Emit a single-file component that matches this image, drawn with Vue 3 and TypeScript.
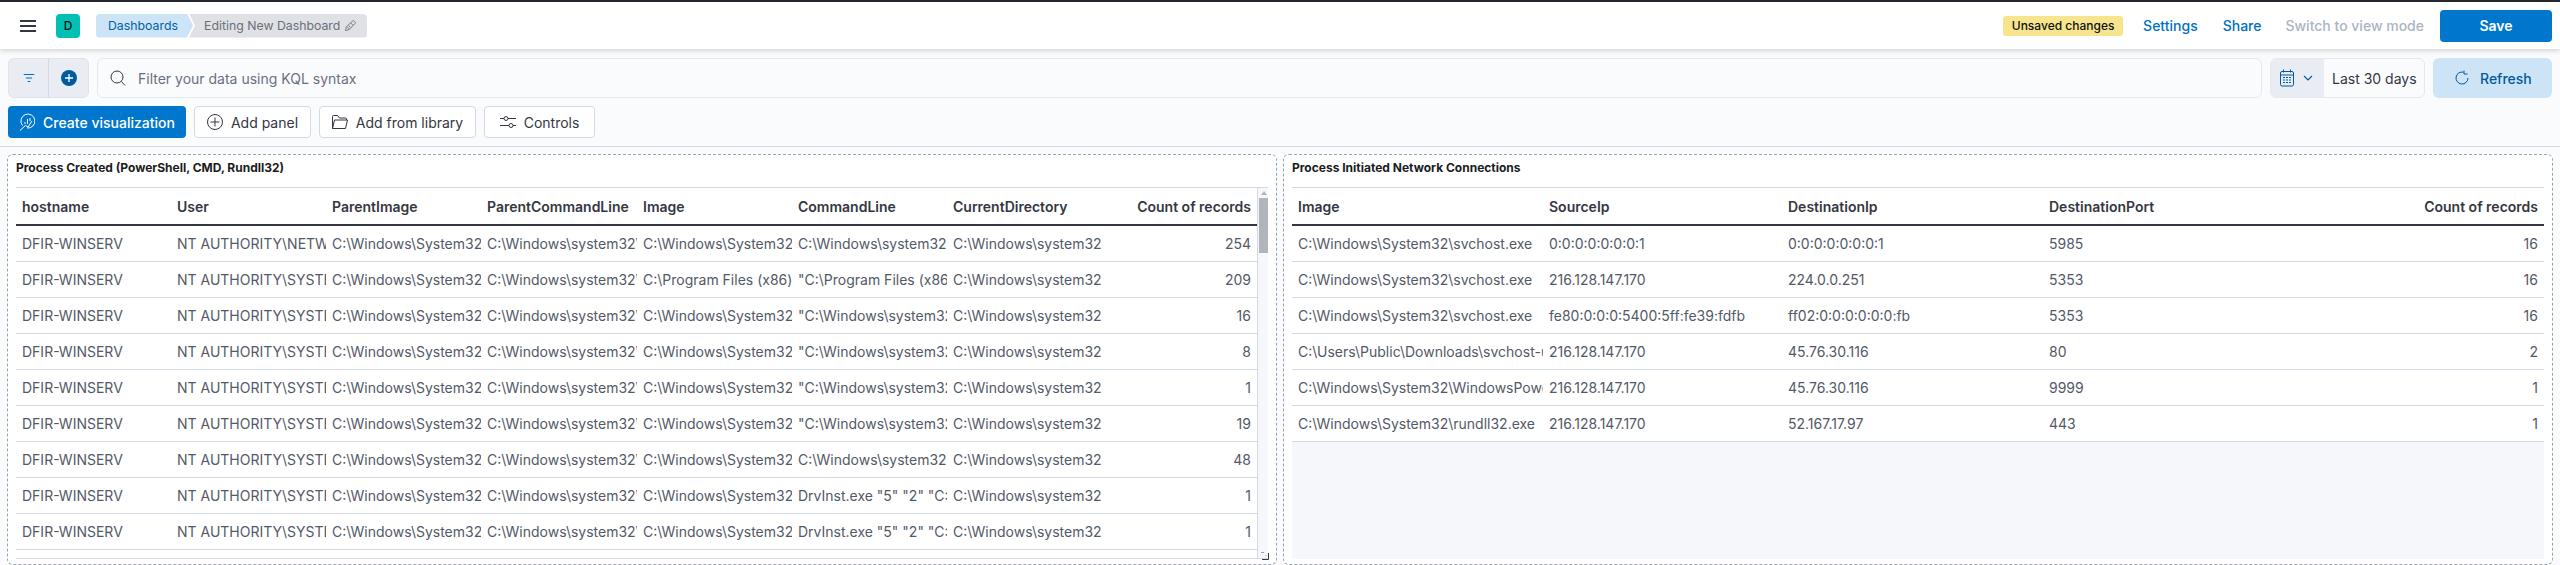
<script setup lang="ts">
interface Column { name: string; width: number; right?: boolean }
interface Panel {
  title: string
  columns: Column[]
  rows: string[][]
  scroll: boolean
}

const sys32 = 'C:\\Windows\\System32\\svchost.exe -k'
const cmd = 'C:\\Windows\\system32\\svchost.exe -k netsvcs'
const dir = 'C:\\Windows\\system32'
const host = 'DFIR-WINSERV'
const sysUser = 'NT AUTHORITY\\SYSTEM'
const quoted = '"C:\\Windows\\system32\\cmd.exe" /c start'
const drv = 'DrvInst.exe "5" "2" "C:\\Windows\\INF"'
const svc = 'C:\\Windows\\System32\\svchost.exe'

const panels: Panel[] = [
  {
    title: 'Process Created (PowerShell, CMD, Rundll32)',
    scroll: true,
    columns: [
      { name: 'hostname', width: 155 },
      { name: 'User', width: 155 },
      { name: 'ParentImage', width: 155 },
      { name: 'ParentCommandLine', width: 156 },
      { name: 'Image', width: 155 },
      { name: 'CommandLine', width: 155 },
      { name: 'CurrentDirectory', width: 155 },
      { name: 'Count of records', width: 155, right: true },
    ],
    rows: [
      [host, 'NT AUTHORITY\\NETWORK SERVICE', sys32, cmd, sys32, cmd, dir, '254'],
      [host, sysUser, sys32, cmd, 'C:\\Program Files (x86)\\Agent\\agent.exe', '"C:\\Program Files (x86)\\Agent\\agent.exe"', dir, '209'],
      [host, sysUser, sys32, cmd, sys32, quoted, dir, '16'],
      [host, sysUser, sys32, cmd, sys32, quoted, dir, '8'],
      [host, sysUser, sys32, cmd, sys32, quoted, dir, '1'],
      [host, sysUser, sys32, cmd, sys32, quoted, dir, '19'],
      [host, sysUser, sys32, cmd, sys32, cmd, dir, '48'],
      [host, sysUser, sys32, cmd, sys32, drv, dir, '1'],
      [host, sysUser, sys32, cmd, sys32, drv, dir, '1'],
    ],
  },
  {
    title: 'Process Initiated Network Connections',
    scroll: false,
    columns: [
      { name: 'Image', width: 251 },
      { name: 'SourceIp', width: 239 },
      { name: 'DestinationIp', width: 261 },
      { name: 'DestinationPort', width: 261 },
      { name: 'Count of records', width: 240, right: true },
    ],
    rows: [
      [svc, '0:0:0:0:0:0:0:1', '0:0:0:0:0:0:0:1', '5985', '16'],
      [svc, '216.128.147.170', '224.0.0.251', '5353', '16'],
      [svc, 'fe80:0:0:0:5400:5ff:fe39:fdfb', 'ff02:0:0:0:0:0:0:fb', '5353', '16'],
      ['C:\\Users\\Public\\Downloads\\svchost-update.exe', '216.128.147.170', '45.76.30.116', '80', '2'],
      ['C:\\Windows\\System32\\WindowsPowerShell\\v1.0\\powershell.exe', '216.128.147.170', '45.76.30.116', '9999', '1'],
      ['C:\\Windows\\System32\\rundll32.exe', '216.128.147.170', '52.167.17.97', '443', '1'],
    ],
  },
]
</script>

<template>
  <div class="app">
    <header class="topbar">
      <button class="burger" aria-label="menu"><span></span><span></span><span></span></button>
      <div class="logo">D</div>
      <nav class="crumbs">
        <span class="crumb first">Dashboards</span>
        <span class="crumb second">
          Editing New Dashboard
          <svg width="12" height="12" viewBox="0 0 16 16" fill="none" stroke="#69707d" stroke-width="1.2">
            <path d="M2 14l1-4.500L11 1.500a1.800 1.800 0 0 1 2.600 0l.9.9a1.800 1.800 0 0 1 0 2.600L6.500 13z" />
            <path d="M4 9l3.500 3.500M6 7l3 3M9 4l3 3" />
          </svg>
        </span>
      </nav>
      <div class="actions">
        <span class="badge">Unsaved changes</span>
        <a class="link settings">Settings</a>
        <a class="link share">Share</a>
        <a class="link muted">Switch to view mode</a>
        <button class="save">Save</button>
      </div>
    </header>

    <section class="filters">
      <div class="filter-group">
        <span class="filter-btn">
          <svg width="14" height="14" viewBox="0 0 16 16" stroke="#0071c2" stroke-width="1.300" fill="none">
            <path d="M2 4h12M4.500 8h7M6.500 12h3" />
          </svg>
        </span>
        <span class="filter-btn">
          <svg width="16" height="16" viewBox="0 0 16 16">
            <circle cx="8" cy="8" r="8" fill="#005a9e" />
            <path d="M8 4v8M4 8h8" stroke="#fff" stroke-width="1.300" />
          </svg>
        </span>
      </div>
      <div class="query">
        <svg width="16" height="16" viewBox="0 0 16 16" fill="none" stroke="#343741" stroke-width="1">
          <circle cx="7" cy="7" r="6" />
          <path d="M11.500 11.500l3.500 4" />
        </svg>
        <span>Filter your data using KQL syntax</span>
      </div>
      <div class="date">
        <span class="date-icon">
          <svg width="14" height="18" viewBox="0 0 14 18" fill="none" stroke="#005a9e" stroke-width="1">
            <rect x="0.500" y="2.500" width="13" height="14.500" rx="1.500" />
            <path d="M0.500 6h13M3.500 0.500v3M10.500 0.500v3" />
            <path d="M3 8.500h2M6 8.500h2M9 8.500h2M3 11h2M6 11h2M9 11h2M3 13.500h2M6 13.500h2M9 13.500h2" stroke-width="1.200" />
          </svg>
          <svg width="10" height="6" viewBox="0 0 10 6" fill="none" stroke="#005a9e" stroke-width="1.100">
            <path d="M1 1l4 4 4-4" />
          </svg>
        </span>
        <span class="date-text">Last 30 days</span>
      </div>
      <button class="refresh">
        <svg width="14" height="16" viewBox="0 0 14 16" fill="none" stroke="#005a9e" stroke-width="1">
          <path d="M8.500 2.200A6 6 0 1 0 13 8" />
          <path d="M9 0.500v3.500h3.500" />
        </svg>
        Refresh
      </button>
    </section>

    <section class="toolbar">
      <button class="tool primary">
        <svg width="16" height="18" viewBox="0 0 16 18" fill="none" stroke="#fff" stroke-width="1">
          <path d="M3.500 12.500A7 7 0 1 1 8 15" />
          <path d="M1 17.500l5.500-5 2.500 1.500 4-6" />
          <path d="M6 9v2M8.500 6v5M11 5v3" />
        </svg>
        Create visualization
      </button>
      <button class="tool add">
        <svg width="16" height="16" viewBox="0 0 16 16" fill="none" stroke="#343741" stroke-width="1">
          <circle cx="8" cy="8" r="7.500" />
          <path d="M8 3.500v9M3.500 8h9" />
        </svg>
        Add panel
      </button>
      <button class="tool library">
        <svg width="16" height="14" viewBox="0 0 16 14" fill="none" stroke="#343741" stroke-width="1">
          <path d="M0.500 13.500V1.500a1 1 0 0 1 1-1h4l2 2.500h6a1 1 0 0 1 1 1V5" />
          <path d="M0.500 13.500l2-8.500h13l-2 8.500z" />
        </svg>
        Add from library
      </button>
      <button class="tool controls">
        <svg width="16" height="12" viewBox="0 0 16 12" fill="none" stroke="#343741" stroke-width="1">
          <path d="M0 2.500h4M8 2.500h8M0 9.500h9M13 9.500h3" />
          <circle cx="6" cy="2.500" r="2" />
          <circle cx="11" cy="9.500" r="2" />
        </svg>
        Controls
      </button>
    </section>

    <main class="panels">
      <article v-for="panel in panels" :key="panel.title" class="panel">
        <h2 class="panel-title">{{ panel.title }}</h2>
        <div class="table-wrap" :class="{ empty: !panel.scroll }">
          <table class="grid" :style="{ width: panel.columns.reduce((a, c) => a + c.width, 0) + 'px' }">
            <colgroup>
              <col v-for="col in panel.columns" :key="col.name" :style="{ width: col.width + 'px' }" />
            </colgroup>
            <thead>
              <tr>
                <th v-for="col in panel.columns" :key="col.name" :class="{ right: col.right }">
                  <div class="cell">{{ col.name }}</div>
                </th>
              </tr>
            </thead>
            <tbody>
              <tr v-for="(row, i) in panel.rows" :key="i">
                <td v-for="(val, j) in row" :key="j" :class="{ right: panel.columns[j].right }">
                  <div class="cell">{{ val }}</div>
                </td>
              </tr>
            </tbody>
          </table>
          <div v-if="panel.scroll" class="scrollbar">
            <span class="arrow"></span>
            <span class="thumb"></span>
          </div>
        </div>
        <svg v-if="panel.scroll" class="resize" width="8" height="8" viewBox="0 0 8 8" fill="none" stroke="#343741" stroke-width="1">
          <path d="M7.500 1v6.500H1" />
          <path d="M0 0.500h3M5 4v-1" stroke="#98a2b3" />
        </svg>
      </article>
    </main>
  </div>
</template>

<style>
html, body {
  margin: 0;
  height: 565px;
  overflow: hidden;
  background: #fafbfd;
}
</style>

<style scoped>
.app {
  width: 2560px;
  height: 565px;
  overflow: hidden;
  background: #fafbfd;
  font-family: Inter, "Noto Sans", sans-serif;
  font-size: 14px;
  color: #343741;
}
button { font: inherit; border: 0; padding: 0; background: none; }

.topbar {
  position: relative;
  z-index: 2;
  box-sizing: border-box;
  height: 49px;
  display: flex;
  align-items: center;
  padding: 0 8px 0 20px;
  background: #fff;
  border-top: 2px solid #25282f;
  box-shadow: 0 1px 5px rgba(0, 0, 0, 0.12), 0 3px 6px rgba(0, 0, 0, 0.06);
}
.burger { width: 16px; display: flex; flex-direction: column; gap: 3px; margin-right: 20px; }
.burger span { height: 2px; background: #343741; }
.logo {
  width: 24px;
  height: 24px;
  margin-right: 16px;
  border-radius: 4px;
  background: #00bfb3;
  color: #111;
  font-size: 12px;
  font-weight: 500;
  line-height: 24px;
  text-align: center;
}
.crumbs { display: flex; height: 24px; font-size: 12.300px; line-height: 23px; }
.crumb { display: flex; align-items: center; box-sizing: border-box; }
.first {
  width: 97px;
  padding-left: 12px;
  background: #cce4f5;
  color: #0061a6;
  border-radius: 4px 0 0 4px;
  clip-path: polygon(0 0, 91px 0, 100% 50%, 91px 100%, 0 100%);
}
.second {
  width: 178px;
  margin-left: -4px;
  padding-left: 15px;
  gap: 4px;
  background: #e0e1e5;
  color: #69707d;
  border-radius: 0 4px 4px 0;
  clip-path: polygon(0 0, 100% 0, 100% 100%, 0 100%, 6px 50%);
}
.actions { margin-left: auto; display: flex; align-items: center; }
.badge {
  box-sizing: border-box;
  width: 120px;
  height: 20px;
  margin-right: 20px;
  border-radius: 3px;
  background: #f6e58d;
  color: #111;
  font-size: 12px;
  font-weight: 500;
  line-height: 20px;
  text-align: center;
}
.link { color: #0071c2; font-size: 14px; font-weight: 500; white-space: nowrap; }
.settings { margin-right: 25px; }
.share { margin-right: 24px; }
.muted { color: #abb4c4; margin-right: 16px; }
.save {
  width: 112px;
  height: 32px;
  border-radius: 4px;
  background: #0077cc;
  color: #fff;
  font-weight: 600;
}

.filters {
  display: flex;
  gap: 8px;
  height: 40px;
  margin-top: 9px;
  padding: 0 8px;
}
.filter-group {
  display: flex;
  width: 81px;
  box-sizing: border-box;
  border: 1px solid #dfe3ec;
  border-radius: 6px;
  background: #e9edf3;
}
.filter-btn { flex: 1; display: flex; align-items: center; justify-content: center; }
.filter-btn + .filter-btn { border-left: 1px solid #d3dae6; }
.query {
  flex: 1;
  display: flex;
  align-items: center;
  gap: 12px;
  padding-left: 12px;
  border: 1px solid #e4e8f0;
  border-radius: 6px;
  color: #69707d;
  font-size: 14px;
}
.date {
  display: flex;
  width: 155px;
  box-sizing: border-box;
  border: 1px solid #e4e8f0;
  border-radius: 6px;
  overflow: hidden;
}
.date-icon {
  width: 53px;
  display: flex;
  align-items: center;
  gap: 9px;
  padding-left: 9px;
  box-sizing: border-box;
  background: #e9edf3;
}
.date-text { flex: 1; align-self: center; padding-left: 8px; white-space: nowrap; }
.refresh {
  width: 119px;
  display: flex;
  align-items: center;
  gap: 11px;
  padding-left: 22px;
  box-sizing: border-box;
  border-radius: 6px;
  background: #cce4f5;
  color: #005a9e;
  font-weight: 500;
}

.toolbar {
  display: flex;
  gap: 8px;
  margin-top: 8px;
  padding: 0 8px 8px;
  border-bottom: 1px solid #d3dae6;
}
.tool {
  height: 32px;
  display: flex;
  align-items: center;
  justify-content: center;
  gap: 8px;
  box-sizing: border-box;
  border: 1px solid #d3dae6;
  border-radius: 4px;
  background: #fff;
  color: #343741;
  font-weight: 400;
}
.primary {
  width: 178px;
  border: 0;
  background: #0077cc;
  color: #fff;
  font-weight: 500;
}
.add { width: 117px; }
.library { width: 157px; }
.controls { width: 111px; }

.panels {
  display: grid;
  grid-template-columns: 1270px 1270px;
  gap: 6px;
  margin-top: 7px;
  padding-left: 7px;
}
.panel {
  position: relative;
  box-sizing: border-box;
  height: 411px;
  display: flex;
  flex-direction: column;
  padding: 0 8px;
  border: 1px dashed #98a2b3;
  border-radius: 6px;
  background: #fff;
}
.panel-title {
  height: 32px;
  margin: 0;
  padding-top: 4px;
  box-sizing: border-box;
  color: #1a1c21;
  font-size: 12px;
  font-weight: 700;
  line-height: 18px;
}
.table-wrap {
  height: 372px;
  box-sizing: border-box;
  display: flex;
  align-items: flex-start;
  border-top: 1px solid #d3dae6;
  border-bottom: 1px solid #d3dae6;
  overflow: hidden;
}
.table-wrap.empty { background: #f5f7fa; border-bottom: 0; }
.grid {
  flex: none;
  table-layout: fixed;
  border-collapse: separate;
  border-spacing: 0;
  background: #fff;
}
th, td { padding: 0; text-align: left; }
th {
  height: 36px;
  border-bottom: 2px solid #343741;
  color: #343741;
  font-weight: 600;
}
td { height: 35px; border-bottom: 1px solid #d3dae6; color: #535966; }
.right { text-align: right; }
.cell { padding: 0 6px; overflow: hidden; white-space: nowrap; }

.scrollbar {
  position: relative;
  flex: none;
  width: 11px;
  height: 100%;
  background: #f5f7fa;
  border-left: 1px solid #d3dae6;
  box-sizing: border-box;
}
.thumb {
  position: absolute;
  top: 10px;
  left: 1px;
  width: 9px;
  height: 55px;
  background: #b0b5bb;
}
.arrow {
  position: absolute;
  top: 3px;
  left: 3px;
  border: 3px solid transparent;
  border-top: 0;
  border-bottom: 4px solid #b0b5bb;
}
.resize { position: absolute; left: 1253px; top: 397px; }
</style>
